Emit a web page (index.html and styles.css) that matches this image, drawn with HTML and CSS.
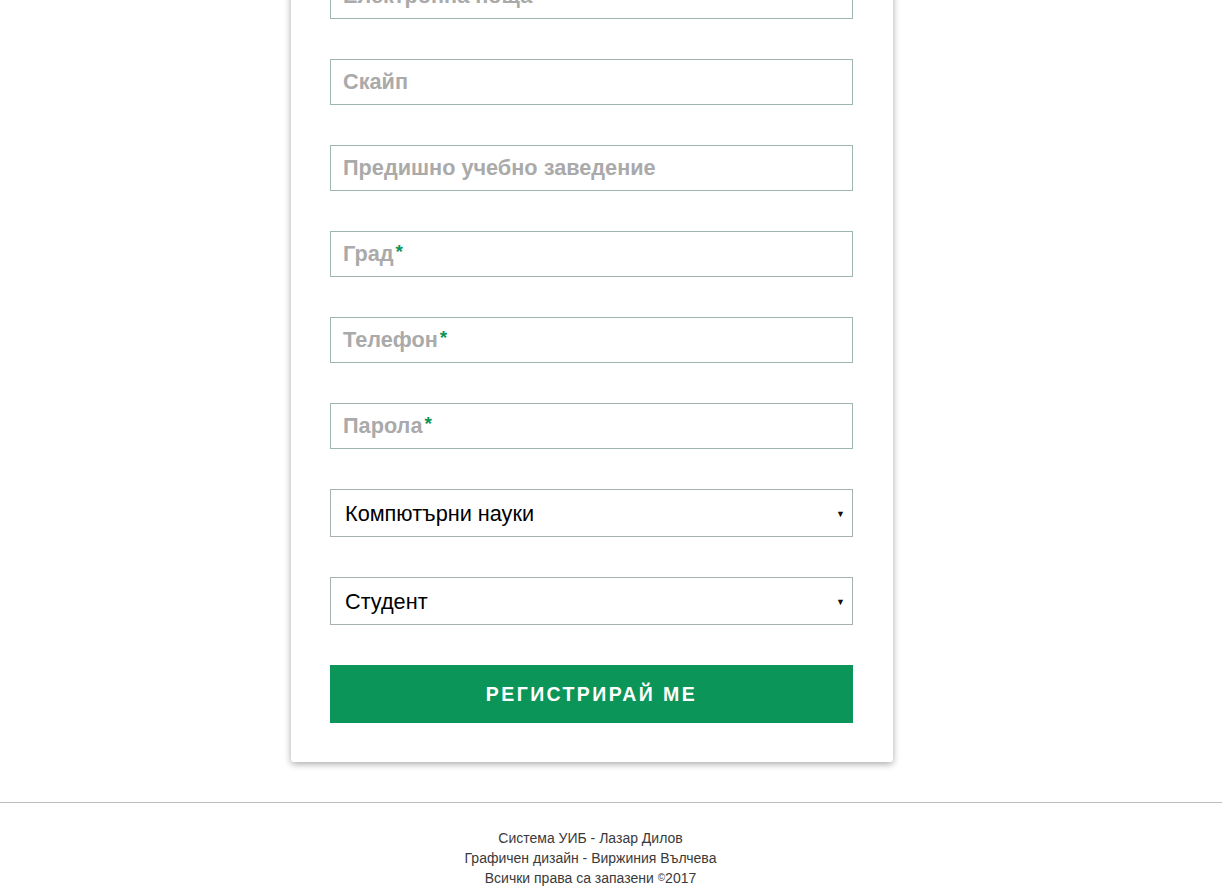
FILE: index.html
```html
<!DOCTYPE html>
<html lang="bg">
<head>
<meta charset="utf-8">
<title>Регистрация</title>
<link rel="stylesheet" href="styles.css">
</head>
<body>
<main class="page">
  <form class="card">
    <div class="field"><span class="ph">Електронна поща</span></div>
    <div class="field"><span class="ph">Скайп</span></div>
    <div class="field"><span class="ph">Предишно учебно заведение</span></div>
    <div class="field"><span class="ph">Град</span><span class="req">*</span></div>
    <div class="field"><span class="ph">Телефон</span><span class="req">*</span></div>
    <div class="field"><span class="ph">Парола</span><span class="req">*</span></div>
    <div class="select"><span>Компютърни науки</span><span class="arrow">▼</span></div>
    <div class="select"><span>Студент</span><span class="arrow">▼</span></div>
    <button type="button" class="submit">Регистрирай ме</button>
  </form>
</main>
<footer class="footer">
  <p>Система УИБ - Лазар Дилов</p>
  <p>Графичен дизайн - Виржиния Вълчева</p>
  <p>Всички права са запазени <span class="copy">©</span>2017</p>
</footer>
</body>
</html>
```
FILE: styles.css
```css
html, body {
  margin: 0;
  padding: 0;
  background: #fff;
  font-family: "Liberation Sans", Arial, sans-serif;
}
.page {
  display: flex;
  padding-left: 291px;
  margin-top: -39px;
}
.card {
  width: 523px;
  padding: 12px 40px 39px 39px;
  background: #fff;
  border-radius: 0 0 3px 3px;
  box-shadow: 0 2px 7px rgba(0, 0, 0, 0.35);
  display: flex;
  flex-direction: column;
  gap: 40px;
}
.field {
  height: 43px;
  border: 1px solid #9fb5b0;
  display: flex;
  align-items: center;
  padding: 0 0 1px 12px;
  box-sizing: content-box;
}
.ph {
  font-weight: bold;
  font-size: 21.7px;
  color: #aaaaaa;
}
.req {
  font-weight: bold;
  font-size: 19px;
  color: #0c9458;
  margin-left: 2px;
  align-self: center;
  margin-top: -4px;
}
.select {
  border: 1px solid #a7b2b0;
  display: flex;
  align-items: center;
  justify-content: space-between;
  padding: 2px 7px 0 14px;
  box-sizing: content-box;
  height: 44px;
  font-size: 21.7px;
  color: #000;
}
.arrow {
  font-size: 9px;
  color: #111;
}
.submit {
  height: 58px;
  border: 0;
  background: #0b9558;
  color: #fff;
  font-family: "Liberation Sans", Arial, sans-serif;
  font-weight: bold;
  font-size: 19.5px;
  letter-spacing: 2.4px;
  text-transform: uppercase;
  padding: 0;
}
.footer {
  margin-top: 40px;
  border-top: 1px solid #bcbcbc;
  padding: 25px 41px 0 0;
  text-align: center;
  font-size: 14px;
  line-height: 20px;
  color: #3a3a3a;
}
.footer p {
  margin: 0;
}
.copy {
  font-size: 10px;
  vertical-align: 2px;
}
```
